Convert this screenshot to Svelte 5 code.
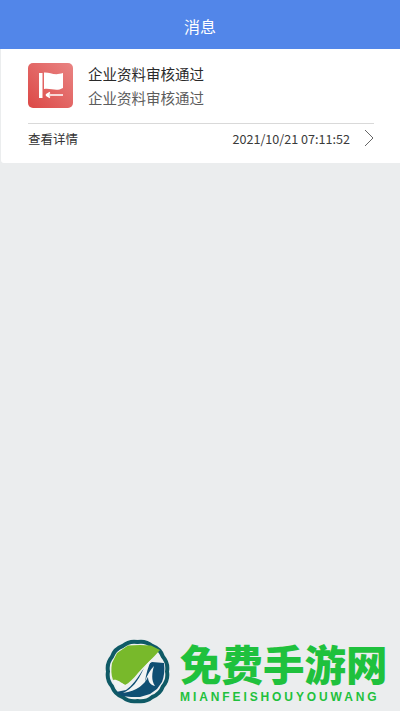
<script>
  let message = {
    title: '企业资料审核通过',
    body: '企业资料审核通过',
    time: '2021/10/21 07:11:52'
  };

  // scalloped badge outline of the stamp, 12 soft lobes
  function scallop(cx, cy, r, lobes) {
    let d = '';
    for (let i = 0; i < lobes; i++) {
      const a = (i / lobes) * Math.PI * 2 - Math.PI / 2;
      const b = ((i + 0.5) / lobes) * Math.PI * 2 - Math.PI / 2;
      const c = ((i + 1) / lobes) * Math.PI * 2 - Math.PI / 2;
      const p = [cx + r * Math.cos(a), cy + r * Math.sin(a)];
      const q = [cx + (r + 2.6) * Math.cos(b), cy + (r + 2.6) * Math.sin(b)];
      const e = [cx + r * Math.cos(c), cy + r * Math.sin(c)];
      if (i === 0) d += `M${p[0].toFixed(1)} ${p[1].toFixed(1)}`;
      d += `Q${q[0].toFixed(1)} ${q[1].toFixed(1)} ${e[0].toFixed(1)} ${e[1].toFixed(1)}`;
    }
    return d + 'z';
  }
</script>

<div class="page">
  <header class="topbar">消息</header>

  <section class="card">
    <div class="msg">
      <div class="msg-icon">
        <svg width="46" height="46" viewBox="0 0 46 46">
          <defs>
            <linearGradient id="flagbg" x1="1" y1="0" x2="0" y2="1">
              <stop offset="0" stop-color="#e98483" />
              <stop offset="1" stop-color="#dc4846" />
            </linearGradient>
          </defs>
          <rect width="45" height="45" rx="5" fill="url(#flagbg)" />
          <rect x="11" y="10" width="3.500" height="25" fill="#fff" />
          <path d="M16 9.500C22 9 26 13 35 10V25C28 29 24 25 16 26z" fill="#fff" />
          <path d="M18 32H35M18 32l4-2.500M18 32l4 2.500" stroke="#fff" stroke-width="1.500" fill="none" />
        </svg>
      </div>
      <div class="msg-text">
        <div class="title">{message.title}</div>
        <div class="body">{message.body}</div>
      </div>
    </div>
    <div class="foot">
      <span class="detail">查看详情</span>
      <span class="time">{message.time}</span>
      <svg class="chevron" width="10" height="18" viewBox="0 0 10 18">
        <path d="M1 1l8 8-8 8" fill="none" stroke="#666" stroke-width="1" />
      </svg>
    </div>
  </section>

  <div class="watermark">
    <svg width="68" height="66" viewBox="0 0 68 66">
      <path d={scallop(33.5, 32.5, 29.5, 12)} fill="#eef0f0" stroke="#0f5a66" stroke-width="4" />
      <path d="M8 24L13 14 24 6.500 36 6 47 6.500 56 11C48 20 40 27 34 34 29 40 25 44 21 46 17 43 13 44 9 41 7 36 7 30 8 24z" fill="#78b92b" />
      <path d="M12 53L22 51C28 47 33 40 38 32 42 27 45 24 48 23L60 24C61 31 60 38 58 43L53 50 46 55 36 58 27 58 18 57z" fill="#0f4f73" />
      <path d="M19 54C28 50 34 42 39 31 41 27 44 23 48 20 44 27 42 35 41 43 43 36 46 31 50 27 48 34 47 41 51 47 46 46 44 42 44 38 41 45 33 52 19 54z" fill="#f2f4f4" />
      <path d="M9 41C13 40 16 43 21 46L14 50C12 47 10 45 9 41z" fill="#f2f4f4" />
    </svg>
    <div class="brand">
      <div class="cn">免费手游网</div>
      <div class="en">MIANFEISHOUYOUWANG</div>
    </div>
  </div>
</div>

<style>
  :global(body) {
    margin: 0;
    background: #ebedee;
  }

  .page {
    position: relative;
    height: 711px;
    overflow: hidden;
    background: #ebedee;
    font-family: "Noto Sans CJK SC", "Noto Sans", sans-serif;
  }

  .topbar {
    height: 49px;
    box-sizing: border-box;
    background: #5286e9;
    color: #fff;
    font-size: 16px;
    display: flex;
    align-items: center;
    justify-content: center;
    padding-top: 3px;
  }

  .card {
    margin-left: 1px;
    height: 114px;
    box-sizing: border-box;
    background: #fff;
    border-radius: 0 0 0 3px;
    padding: 14px 26px 0 27px;
  }

  .msg {
    display: flex;
    gap: 14px;
    height: 60px;
    border-bottom: 1px solid #d9d9d9;
  }

  .msg-icon {
    height: 46px;
  }

  .msg-text {
    display: flex;
    flex-direction: column;
    gap: 3px;
  }

  .title {
    font-size: 14.500px;
    line-height: 21px;
    color: #2a2a2a;
  }

  .body {
    font-size: 14.500px;
    line-height: 21px;
    color: #5c5c5c;
  }

  .foot {
    display: flex;
    align-items: center;
    height: 29px;
    color: #333;
  }

  .detail {
    font-size: 12.500px;
  }

  .time {
    margin-left: auto;
    font-size: 12.600px;
    color: #3a3a3a;
  }

  .chevron {
    margin-left: 14px;
    margin-top: -2px;
  }

  /* site stamp over the bottom of the page */
  .watermark {
    position: absolute;
    left: 104px;
    top: 639px;
    display: flex;
    gap: 8px;
  }

  .brand {
    display: flex;
    flex-direction: column;
    padding-top: 3px;
  }

  .cn {
    font-size: 41.500px;
    line-height: 42px;
    font-weight: 900;
    color: #1fc13d;
    white-space: nowrap;
  }

  .en {
    font-family: "Liberation Sans", sans-serif;
    font-size: 12px;
    line-height: 14px;
    font-weight: 700;
    letter-spacing: 2.900px;
    color: #1fc13d;
    white-space: nowrap;
    margin-top: 6px;
  }
</style>
